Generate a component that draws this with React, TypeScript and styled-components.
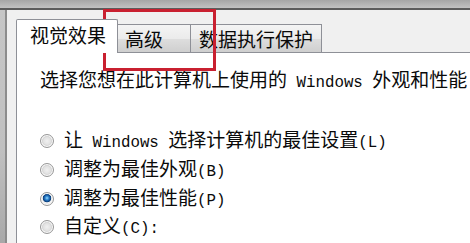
import styled, { createGlobalStyle } from "styled-components";

const GlobalStyle = createGlobalStyle`
  *, *::before, *::after { box-sizing: border-box; }
  html, body { margin: 0; padding: 0; background: #f0f0f0; }
  body {
    font-family: "Noto Sans CJK SC", "Noto Sans", sans-serif;
    color: #0a0a0a;
  }
`;

const Screen = styled.div`
  position: relative;
  width: 470px;
  height: 243px;
  overflow: hidden;
  display: grid;
  grid-template-columns: 7px 1fr;
  grid-template-rows: 10px 1fr;
`;

const TopFrame = styled.div`
  grid-column: 1 / 3;
  background: linear-gradient(#a6a6a6, #c2c2c2);
  border-bottom: 2px solid #5c5c5c;
`;

const LeftFrame = styled.div`
  background: linear-gradient(#c6c6c6, #c0c0c0 60%, #a8a8a8);
  border-right: 2px solid #8c8c8c;
`;

const Dialog = styled.div`
  min-width: 0;
  overflow: hidden;
  background: #f0f0f0;
  padding: 9px 0 0 9px;
  display: flex;
  flex-direction: column;
`;

const TabRow = styled.div`
  display: flex;
  align-items: flex-end;
  height: 33px;
  flex: none;
`;

const Tab = styled.div<{ $active?: boolean; $width: number; $pad: number }>`
  position: relative;
  width: ${({ $width }) => $width}px;
  padding-left: ${({ $pad }) => $pad}px;
  font-size: 19px;
  line-height: 22px;
  white-space: nowrap;
  border: 1px solid #8e9097;
  border-bottom: none;
  ${({ $active }) =>
    $active
      ? `
    z-index: 1;
    height: 34px;
    margin-bottom: -1px;
    padding-top: 4px;
    background: #ffffff;
    border-radius: 2px 2px 0 0;
  `
      : `
    height: 28px;
    padding-top: 3px;
    margin-left: -1px;
    background: linear-gradient(#f4f4f4, #ebebeb 50%, #dedede 51%, #cfcfcf);
  `}
`;

const Highlight = styled.div`
  position: absolute;
  left: 103px;
  top: 9px;
  width: 113px;
  height: 62px;
  border: 3px solid #c92030;
  pointer-events: none;
`;

const Panel = styled.div`
  flex: 1;
  background: #ffffff;
  border-top: 1px solid #8e9097;
  border-left: 1px solid #8e9097;
  padding: 15px 0 0 23px;
`;

const Description = styled.p`
  margin: 0;
  font-size: 19px;
  line-height: 22px;
  white-space: nowrap;
`;

const Latin = styled.span`
  font-family: "Liberation Mono", "DejaVu Sans Mono", monospace;
  font-size: 15.8px;
`;

const OptionList = styled.div`
  margin-top: 33px;
  display: flex;
  flex-direction: column;
`;

const OptionRow = styled.label`
  display: flex;
  align-items: center;
  gap: 10px;
  height: 28.7px;
  font-size: 19px;
  line-height: 22px;
  white-space: nowrap;
`;

const RadioDot = styled.span<{ $checked?: boolean }>`
  flex: none;
  width: 14px;
  height: 14px;
  border-radius: 50%;
  border: 1px solid #979797;
  box-shadow: inset 0 0 0 1px #fbfbfb;
  background: ${({ $checked }) =>
    $checked
      ? "radial-gradient(circle at 50% 42%, #9adcff 0, #3b8fd6 1.6px, #1558a0 3px, #0c3f78 4px, #f1f1f1 4.6px, #e4e4e4 6px)"
      : "radial-gradient(circle at 50% 50%, #f0f0f0 0, #e2e2e2 3.5px, #cfcfcf 5px, #ebebeb 6.5px)"};
`;

const options = [
  { label: <>让<Latin> Windows </Latin>选择计算机的最佳设置<Latin>(L)</Latin></>, checked: false },
  { label: <>调整为最佳外观<Latin>(B)</Latin></>, checked: false },
  { label: <>调整为最佳性能<Latin>(P)</Latin></>, checked: true },
  { label: <>自定义<Latin>(C):</Latin></>, checked: false },
];

export default function App() {
  return (
    <>
      <GlobalStyle />
      <Screen>
        <TopFrame />
        <LeftFrame />
        <Dialog>
          <TabRow>
            <Tab $active $width={102} $pad={13}>视觉效果</Tab>
            <Tab $width={74} $pad={7}>高级</Tab>
            <Tab $width={132} $pad={8}>数据执行保护</Tab>
          </TabRow>
          <Panel>
            <Description>
              选择您想在此计算机上使用的<Latin> Windows </Latin>外观和性能
            </Description>
            <OptionList>
              {options.map((o, i) => (
                <OptionRow key={i}>
                  <RadioDot $checked={o.checked} />
                  <span>{o.label}</span>
                </OptionRow>
              ))}
            </OptionList>
          </Panel>
        </Dialog>
        <Highlight />
      </Screen>
    </>
  );
}
